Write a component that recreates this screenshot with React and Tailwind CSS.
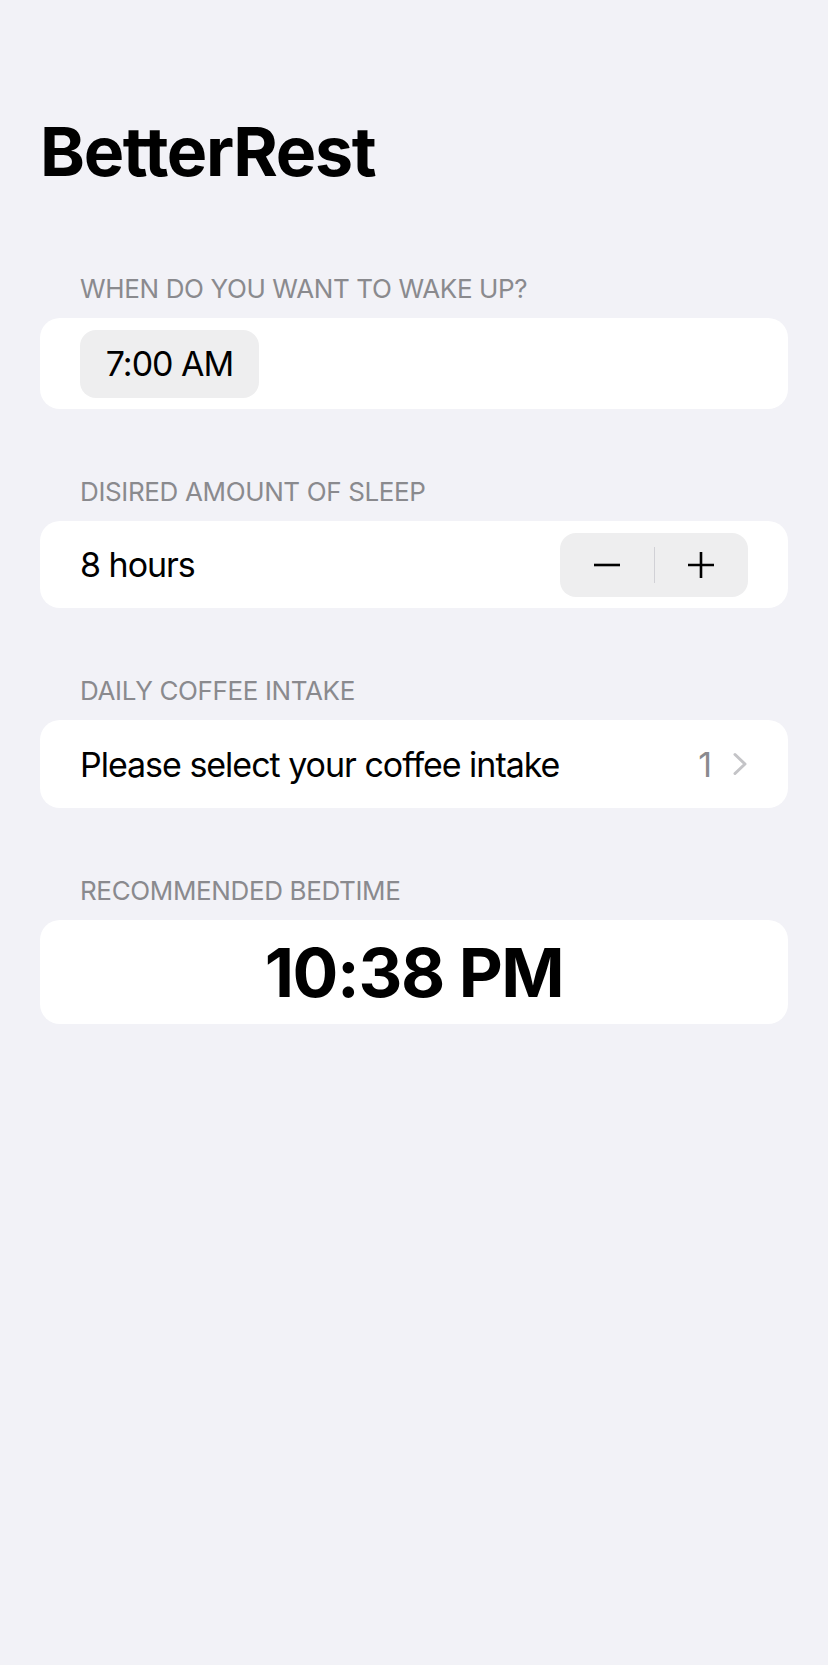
function SectionHeader({ children }) {
  return (
    <div className="h-[32px] pl-[40px] text-[26px] leading-[34px] tracking-[-0.014em] text-[#8a8a8e]">
      {children}
    </div>
  )
}

function Card({ className, children }) {
  return (
    <div className={`mt-[14px] flex items-center rounded-[20px] bg-white px-[40px] ${className}`}>
      {children}
    </div>
  )
}

function Chevron() {
  return (
    <svg width="16" height="24" viewBox="0 0 16 24" fill="none">
      <path d="M3 2.5 L13 12 L3 21.5" stroke="#c4c4c7" strokeWidth="3" strokeLinecap="round" strokeLinejoin="round" />
    </svg>
  )
}

function Stepper() {
  return (
    <div className="flex h-[64px] w-[188px] items-center rounded-[16px] bg-[#eeeeef]">
      <button className="flex h-full flex-1 items-center justify-center">
        <svg width="28" height="28" viewBox="0 0 28 28">
          <path d="M1 14 H27" stroke="black" strokeWidth="2.6" />
        </svg>
      </button>
      <div className="h-[36px] w-px bg-[#d1d1d6]" />
      <button className="flex h-full flex-1 items-center justify-center">
        <svg width="28" height="28" viewBox="0 0 28 28">
          <path d="M1 14 H27 M14 1 V27" stroke="black" strokeWidth="2.6" />
        </svg>
      </button>
    </div>
  )
}

function App() {
  return (
    <div className="min-h-[1665px] bg-[#f2f2f7] px-[40px] pt-[110px] font-[Inter,sans-serif] text-black">
      <h1 className="text-[68px] font-bold leading-[82px] tracking-[-0.02em]">BetterRest</h1>

      <div className="mt-[80px]">
        <SectionHeader>WHEN DO YOU WANT TO WAKE UP?</SectionHeader>
        <Card className="h-[91px]">
          <div className="flex h-[68px] w-[179px] items-center justify-center rounded-[16px] bg-[#eeeeef] text-[34px] tracking-[-0.03em]">
            7:00 AM
          </div>
        </Card>
      </div>

      <div className="mt-[66px]">
        <SectionHeader>DISIRED AMOUNT OF SLEEP</SectionHeader>
        <Card className="h-[87px] justify-between">
          <span className="text-[34px] tracking-[-0.03em]">8 hours</span>
          <Stepper />
        </Card>
      </div>

      <div className="mt-[66px]">
        <SectionHeader>DAILY COFFEE INTAKE</SectionHeader>
        <Card className="h-[88px] justify-between">
          <span className="text-[34px] tracking-[-0.03em]">Please select your coffee intake</span>
          <div className="flex items-center gap-[20px]">
            <span className="text-[34px] text-[#8a8a8e]">1</span>
            <Chevron />
          </div>
        </Card>
      </div>

      <div className="mt-[66px]">
        <SectionHeader>RECOMMENDED BEDTIME</SectionHeader>
        <Card className="h-[104px] justify-center">
          <span className="text-[68px] font-bold leading-[68px] tracking-[-0.02em]">10:38 PM</span>
        </Card>
      </div>
    </div>
  )
}

export default App
